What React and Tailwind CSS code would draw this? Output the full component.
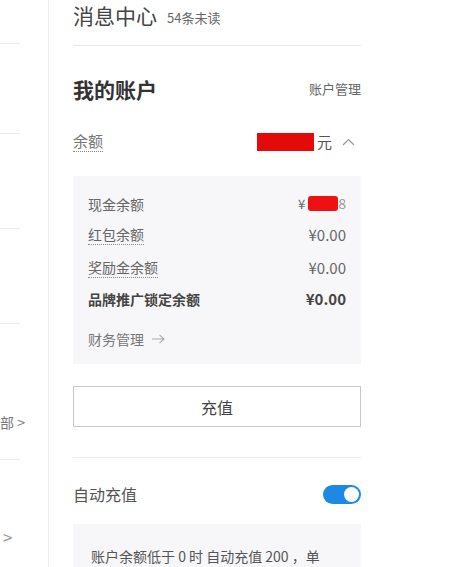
import React from "react";

const font = { fontFamily: '"Noto Sans CJK SC", "Noto Sans", sans-serif' };

const SideLine = ({ h, children }) => (
  <div className={`${h} relative flex items-end overflow-hidden`}>
    {children}
    <div className="absolute bottom-0 left-0 w-[20px] border-b border-[#ececec]" />
  </div>
);

const Row = ({ label, value, dotted, bold, className }) => (
  <div className={`flex items-center justify-between ${className}`}>
    <span
      className={`text-[14px] leading-[20px] ${bold ? "font-bold text-[#444]" : "text-[#666]"} ${
        dotted ? "border-b border-dotted border-[#888]" : ""
      }`}
    >
      {label}
    </span>
    <span className={`text-[15px] leading-[20px] ${bold ? "font-bold text-[#444]" : "text-[#666]"}`}>
      {value}
    </span>
  </div>
);

export default function App() {
  return (
    <div className="flex h-[567px] w-[465px] overflow-hidden bg-white" style={font}>
      {/* left nav column */}
      <div className="flex w-[49px] shrink-0 flex-col border-r border-[#eeeeee]">
        <SideLine h="h-[44px]" />
        <SideLine h="h-[90px]" />
        <SideLine h="h-[95px]" />
        <SideLine h="h-[95px]" />
        <div className="relative h-[136px]">
          <span className="absolute left-0 top-[88px] text-[14px] text-[#777]">部 &gt;</span>
          <div className="absolute bottom-0 left-0 w-[20px] border-b border-[#ececec]" />
        </div>
        <div className="relative flex-1">
          <span className="absolute left-[3px] top-[64px] text-[17px] text-[#999]">&gt;</span>
        </div>
      </div>

      {/* main panel */}
      <div className="ml-[24px] flex w-[288px] flex-col">
        <div className="flex h-[31px] items-end gap-[10px] pb-[2px]">
          <span className="text-[21px] leading-[28px] text-[#444]">消息中心</span>
          <span className="text-[13px] leading-[22px] text-[#666]">54条未读</span>
        </div>
        <div className="mt-[14px] border-b border-[#e8e8e8]" />

        <div className="mt-[29px] flex items-center justify-between">
          <span className="text-[21px] font-bold leading-[28px] text-[#333]">我的账户</span>
          <span className="text-[13px] text-[#666]">账户管理</span>
        </div>

        <div className="mt-[28px] flex items-center justify-between">
          <span className="border-b border-dotted border-[#888] text-[15px] leading-[20px] text-[#777]">余额</span>
          <div className="flex items-center">
            <span className="h-[18px] w-[57px] bg-[#e30a0a]" />
            <span className="ml-[3px] text-[15px] text-[#555]">元</span>
            <svg className="ml-[10px]" width="13" height="8" viewBox="0 0 13 8">
              <path d="M1 7 L6.5 1.5 L12 7" fill="none" stroke="#999" strokeWidth="1.2" />
            </svg>
            <span className="w-[6px]" />
          </div>
        </div>

        <div className="mt-[23px] flex h-[190px] flex-col bg-[#f7f7f9] px-[15px] pt-[17px]">
          <div className="flex items-center justify-between">
            <span className="text-[14px] leading-[20px] text-[#666]">现金余额</span>
            <div className="flex items-center">
              <span className="text-[13px] text-[#666]">¥</span>
              <span className="ml-[3px] h-[15px] w-[30px] rounded-[3px] bg-[#ee1111]" />
              <span className="text-[14px] text-[#999]">8</span>
            </div>
          </div>
          <Row label="红包余额" value="¥0.00" dotted className="mt-[10px]" />
          <Row label="奖励金余额" value="¥0.00" dotted className="mt-[12px]" />
          <Row label="品牌推广锁定余额" value="¥0.00" bold className="mt-[11px]" />
          <div className="mt-[20px] flex items-center gap-[8px]">
            <span className="text-[14px] leading-[20px] text-[#777]">财务管理</span>
            <svg width="13" height="10" viewBox="0 0 13 10">
              <path d="M0 5 H12 M7.5 0.8 L12 5 L7.5 9.2" fill="none" stroke="#aaa" strokeWidth="1.1" />
            </svg>
          </div>
        </div>

        <button className="mt-[22px] h-[41px] w-full border border-[#c8c8c8] bg-white text-[16px] text-[#444]">
          充值
        </button>

        <div className="mt-[30px] border-b border-[#ececec]" />

        <div className="mt-[25px] flex items-center justify-between">
          <span className="text-[16px] leading-[22px] text-[#555]">自动充值</span>
          <div className="flex h-[19px] w-[38px] items-center justify-end rounded-full bg-[#1e88e5] pr-[2px]">
            <span className="h-[15px] w-[15px] rounded-full bg-white" />
          </div>
        </div>

        <div className="mt-[19px] flex-1 bg-[#f7f7f9] px-[18px] pt-[22px]">
          <p className="whitespace-nowrap text-[14px] text-[#555]">账户余额低于 0 时 自动充值 200 ，单</p>
        </div>
      </div>
    </div>
  );
}
